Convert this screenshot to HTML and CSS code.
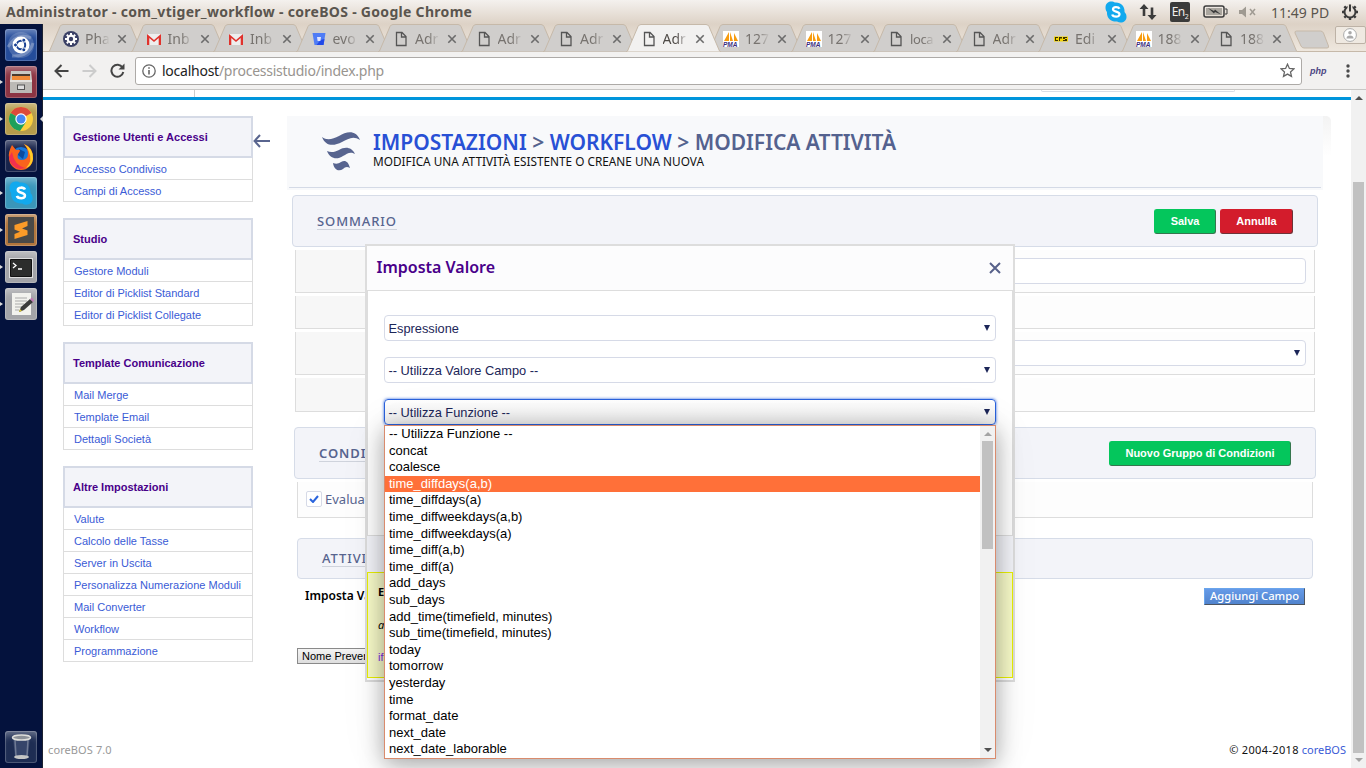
FILE: index.html
```html
<!DOCTYPE html>
<html lang="it">
<head>
<meta charset="utf-8">
<title>Administrator - com_vtiger_workflow - coreBOS</title>
<link rel="stylesheet" href="styles.css">
</head>
<body>
<svg width="0" height="0" class="defs">
  <defs>
    <symbol id="tab" viewBox="0 0 96 28"><path d="M0 28 L1.5 27 L12 2.5 Q13 .5 15 .5 H80 Q82 .5 83 2.5 L93.5 27 L95 28Z" stroke="#c6b9a9" stroke-width="1"/></symbol>
    <symbol id="page" viewBox="0 0 16 16"><path d="M3.500 1.500h5.500l4 4V14.500h-9.500z M8.500 1.500v4.500h4.500" fill="none" stroke="#555" stroke-width="1.300"/></symbol>
    <symbol id="x" viewBox="0 0 10 10"><path d="M1.300 1.300l7.400 7.400M8.700 1.300l-7.400 7.400" stroke="#6b6b6b" stroke-width="1.600"/></symbol>
    <symbol id="mail" viewBox="0 0 16 16"><path d="M1 3h14v11H1z" fill="#eee"/><path d="M1 14V3l7 6 7-6v11h-2.300V7L8 11 3.300 7v7z" fill="#e0322c"/></symbol>
    <symbol id="pma" viewBox="0 0 16 16"><path d="M0 0h16v16H0z" fill="#fff"/><path d="M1 10L6 1v9zM7 10V1l3 9zM11 10V2l4 8z" fill="#f89c0e"/><text x="0" y="15.500" class="pma-text">PMA</text></symbol>
    <symbol id="gear" viewBox="0 0 16 16"><circle cx="8" cy="8" r="8" fill="#3a4066"/><circle cx="8" cy="8" r="3.300" fill="none" stroke="#fff" stroke-width="2.200"/><path d="M8 2v2M8 12v2M2 8h2M12 8h2M3.800 3.800l1.400 1.400M10.800 10.800l1.400 1.400M12.200 3.800l-1.400 1.400M5.200 10.800l-1.400 1.400" stroke="#fff" stroke-width="2"/></symbol>
    <symbol id="bit" viewBox="0 0 16 16"><path d="M1.500 2h13l-2 12h-9z" fill="#4f7cf5"/><path d="M9.500 9l4-1-1 6h-7z" fill="#2149e8"/><path d="M6 6h4l-.6 4H6.600z" fill="#dfe6ff"/></symbol>
    <symbol id="core" viewBox="0 0 16 16"><path d="M1 5.500h14v5H1z" fill="#f5d400"/><path d="M2 6h3v1H3v2h2v1H2zM6 6h3v1.500H7V10H6zM10 6h4v1h-2v1h2v2h-4V9h2V8h-2z" fill="#3c3300"/></symbol>
    <symbol id="skype" viewBox="0 0 22 22"><path d="M6 .5c2 0 3 .5 4 1 6-.5 10 4 9.500 9.500C21 12.500 21.500 14 21.500 16c0 5-5.500 7-9.500 4.500C6 21 1.500 17 2 11 .8 9.500.5 8 .5 6.500.5 3 3 .5 6 .5z" fill="#12a9ee"/><path d="M14.500 7.700C13.500 5.500 8 5.300 8 8.200c0 3 6.500 1.900 6.500 5.100 0 3.300-6.500 3-7.300.2" fill="none" stroke="#fff" stroke-width="2.300"/></symbol>
  </defs>
</svg>

<header class="titlebar">
  <div class="window-title">Administrator - com_vtiger_workflow - coreBOS - Google Chrome</div>
  <div class="indicators">
    <svg width="22" height="22"><use href="#skype"/></svg>
    <svg class="ind-net" width="18" height="18" viewBox="0 0 18 18"><path d="M5 1l4.500 5H6.300v7H3.700V6H.5zM13 17l4.500-5h-3.200V4.500h-2.600V12H8.500z" fill="#3b3b3b"/></svg>
    <span class="lang">En<sub>2</sub></span>
    <svg class="ind-bat" width="25" height="14" viewBox="0 0 25 14"><rect x="1" y="1" width="20" height="11" rx="2" fill="none" stroke="#3b3b3b" stroke-width="1.500"/><path d="M22 4h2v5h-2" fill="none" stroke="#3b3b3b"/><path d="M3 3h16v7H3z" fill="#aaa69f"/><path d="M5 3l6 3 1-1.500 6 5-6-2.500-1 1.500z" fill="#3b3b3b"/></svg>
    <svg class="ind-vol" width="18" height="12" viewBox="0 0 18 12"><path d="M0 4h3l4-3.500v11L3 8H0z" fill="#9f9a92"/><path d="M11 3l5 6M16 3l-5 6" stroke="#9f9a92" stroke-width="1.500"/></svg>
    <span class="clock">11:49 PD</span>
    <svg class="ind-power" width="18" height="18" viewBox="0 0 18 18"><circle cx="9" cy="9" r="5.500" fill="none" stroke="#3b3b3b" stroke-width="2"/><path d="M9 15v2M1 9h2M15 9h2M3.300 3.300l1.700 1.700M13 13l1.700 1.700M14.700 3.300L13 5M5 13l-1.700 1.700" stroke="#3b3b3b" stroke-width="2.400"/><path d="M6.500 1h5v5h-5z" fill="#e6e0d8"/><path d="M9 1.500v7" stroke="#3b3b3b" stroke-width="2"/></svg>
  </div>
</header>

<div class="desktop">
  <nav class="launcher">
    <div class="tile t-dash"><svg viewBox="0 0 32 32"><circle cx="16" cy="16" r="13" fill="#fff" opacity=".16"/><path d="M3 18Q12 3 26 9M7 27Q24 28 28 14" fill="none" stroke="#fff" stroke-width="3" opacity=".25"/><circle cx="16" cy="16" r="8.500" fill="#fff"/><circle cx="16" cy="16" r="4.200" fill="none" stroke="#173f92" stroke-width="2"/><g fill="#173f92" stroke="#fff"><circle cx="10.500" cy="16" r="2"/><circle cx="18.800" cy="11.200" r="2"/><circle cx="18.800" cy="20.800" r="2"/></g></svg></div>
    <div class="tile t-files run"><svg viewBox="0 0 32 32"><path d="M6 5h20l1 9H5z" fill="#c9c7c3"/><path d="M7 8h18v3H7z" fill="#4a3a30"/><path d="M7 10h18v4H7z" fill="#f08a39"/><path d="M5 14h22v13H5z" fill="#bbb9b5"/><path d="M5 14h22v2H5z" fill="#e3e1dd"/><rect x="12.500" y="19" width="7" height="4.500" fill="#ddd" stroke="#555"/></svg></div>
    <div class="tile t-chrome run active"><svg viewBox="0 0 32 32"><circle cx="16" cy="16" r="12" fill="#fbcf3f"/><path d="M16 16L5.600 10A12 12 0 0 1 26.400 10z" fill="#dc4a3b"/><path d="M16 16L5.600 10A12 12 0 0 0 15 28l6-9z" fill="#1da05c"/><circle cx="16" cy="16" r="5.700" fill="#fff"/><circle cx="16" cy="16" r="4.500" fill="#4587f4"/></svg></div>
    <div class="tile t-fox"><svg viewBox="0 0 32 32"><circle cx="16" cy="17" r="10" fill="#1677db"/><path d="M14 9l6 3-2 7-5-4z" fill="#0a4aa0"/><path d="M7 5l4 5q4-1 4 1l-2 3q-2 5 3 6 7 0 7-6 0-5-4-10 9 3 9 14a12 12 0 0 1-24 0Q3 12 7 5z" fill="#fb631c"/><path d="M19 4q10 5 9 15-1 7-7 9 7-7 3-16-1-4-5-8z" fill="#ffce28"/><path d="M4 17q1 10 11 12l5-1Q9 25 7 12z" fill="#f2304e"/></svg></div>
    <div class="tile t-skype run"><svg viewBox="0 0 32 32"><g transform="translate(4 4) scale(1.100)"><use href="#skype" width="22" height="22"/></g></svg></div>
    <div class="tile t-sublime run"><svg viewBox="0 0 32 32"><path d="M3 3h26v26H3z" fill="#4a4947"/><path d="M9.500 11L22.500 7v5L17 14.500l5.500 2v4.500l-13 4v-5l5.500-2.200-5.500-2.300z" fill="#fb9b28"/></svg></div>
    <div class="tile t-term run"><svg viewBox="0 0 32 32"><path d="M4 7h24v20H4z" fill="#ddd"/><path d="M5.500 8.500h21v17h-21z" fill="#2c2d2c" stroke="#111"/><path d="M8 12l3 2.500L8 17M13 18h4" fill="none" stroke="#fff" stroke-width="1.300"/></svg></div>
    <div class="tile t-edit run"><svg viewBox="0 0 32 32"><path d="M7 5h19v22H7z" fill="#f2f2ee"/><path d="M10 10h12M10 13h12M10 16h9M10 19h7M10 22h4" stroke="#aaa"/><path d="M14 24l2-5 9-8 3 3-9 8z" fill="#3b3b3b"/><path d="M25 11l2-1.500 2 3-1 1.500z" fill="#c178b4"/><path d="M14 24l1-3 2 2z" fill="#d8c533"/></svg></div>
    <div class="tile t-trash"><svg viewBox="0 0 32 32"><path d="M8 7h17l-2 19q-6.500 3-13 0z" fill="#36456a"/><path d="M10 9l1 16M23 9l-1 16" stroke="#6f7a94" stroke-width="1.500"/><ellipse cx="16.500" cy="6.500" rx="9" ry="2.600" fill="#8b9098" stroke="#dededb" stroke-width="1.500"/><ellipse cx="16.500" cy="26" rx="7.500" ry="2" fill="#c5c6c5"/></svg></div>
  </nav>

  <div class="browser">
    <div class="tabs">
      <div class="tab"><svg class="shape"><use href="#tab"/></svg><svg class="fav"><use href="#gear"/></svg><span>Pha</span><svg class="close"><use href="#x"/></svg></div>
      <div class="tab"><svg class="shape"><use href="#tab"/></svg><svg class="fav"><use href="#mail"/></svg><span>Inb</span><svg class="close"><use href="#x"/></svg></div>
      <div class="tab"><svg class="shape"><use href="#tab"/></svg><svg class="fav"><use href="#mail"/></svg><span>Inb</span><svg class="close"><use href="#x"/></svg></div>
      <div class="tab"><svg class="shape"><use href="#tab"/></svg><svg class="fav"><use href="#bit"/></svg><span>evo</span><svg class="close"><use href="#x"/></svg></div>
      <div class="tab"><svg class="shape"><use href="#tab"/></svg><svg class="fav"><use href="#page"/></svg><span>Adr</span><svg class="close"><use href="#x"/></svg></div>
      <div class="tab"><svg class="shape"><use href="#tab"/></svg><svg class="fav"><use href="#page"/></svg><span>Adr</span><svg class="close"><use href="#x"/></svg></div>
      <div class="tab"><svg class="shape"><use href="#tab"/></svg><svg class="fav"><use href="#page"/></svg><span>Adr</span><svg class="close"><use href="#x"/></svg></div>
      <div class="tab current"><svg class="shape"><use href="#tab"/></svg><svg class="fav"><use href="#page"/></svg><span>Adr</span><svg class="close"><use href="#x"/></svg></div>
      <div class="tab"><svg class="shape"><use href="#tab"/></svg><svg class="fav"><use href="#pma"/></svg><span>127</span><svg class="close"><use href="#x"/></svg></div>
      <div class="tab"><svg class="shape"><use href="#tab"/></svg><svg class="fav"><use href="#pma"/></svg><span>127</span><svg class="close"><use href="#x"/></svg></div>
      <div class="tab"><svg class="shape"><use href="#tab"/></svg><svg class="fav"><use href="#page"/></svg><span class="tight">loca</span><svg class="close"><use href="#x"/></svg></div>
      <div class="tab"><svg class="shape"><use href="#tab"/></svg><svg class="fav"><use href="#page"/></svg><span>Adr</span><svg class="close"><use href="#x"/></svg></div>
      <div class="tab"><svg class="shape"><use href="#tab"/></svg><svg class="fav"><use href="#core"/></svg><span>Edi</span><svg class="close"><use href="#x"/></svg></div>
      <div class="tab"><svg class="shape"><use href="#tab"/></svg><svg class="fav"><use href="#pma"/></svg><span>188</span><svg class="close"><use href="#x"/></svg></div>
      <div class="tab"><svg class="shape"><use href="#tab"/></svg><svg class="fav"><use href="#page"/></svg><span>188</span><svg class="close"><use href="#x"/></svg></div>
      <svg class="newtab" width="36" height="19" viewBox="0 0 36 19"><path d="M2.500 1h24q2 0 3 2l5 13q.5 2-1.500 2H10q-2 0-3-2L1 3q-.5-2 1.500-2z" fill="#d0cecc" stroke="#c6b9a9"/></svg>
      <div class="profile"><svg width="14" height="14" viewBox="0 0 14 14"><circle cx="7" cy="7" r="6.400" fill="#fff" stroke="#aaa"/><circle cx="7" cy="4.800" r="1.800" fill="#aaa"/><path d="M3.500 10.500q0-3 3.500-3t3.500 3z" fill="#aaa"/></svg></div>
    </div>

    <div class="toolbar">
      <svg class="nav-back" width="15" height="14" viewBox="0 0 15 14"><path d="M7.500 1L1.500 7l6 6M1.500 7H14.500" fill="none" stroke="#444" stroke-width="2"/></svg>
      <svg class="nav-fwd" width="15" height="14" viewBox="0 0 15 14"><path d="M7.500 1l6 6-6 6M13.500 7H.5" fill="none" stroke="#ccc" stroke-width="2"/></svg>
      <svg class="nav-reload" width="15" height="15" viewBox="0 0 15 15"><path d="M12.500 4.500A6 6 0 1 0 13.300 9" fill="none" stroke="#444" stroke-width="2"/><path d="M14.500.500v6h-6z" fill="#444"/></svg>
      <div class="omnibox">
        <svg width="14" height="14" viewBox="0 0 14 14"><circle cx="7" cy="7" r="6.200" fill="none" stroke="#666" stroke-width="1.300"/><path d="M7 6v4.500M7 3.300v1.500" stroke="#666" stroke-width="1.600"/></svg>
        <span class="url"><b>localhost</b>/processistudio/index.php</span>
        <svg class="star" width="15" height="15" viewBox="0 0 15 15"><path d="M7.500 1.200l1.900 4.200 4.500.5-3.400 3 1 4.500-4-2.300-4 2.300 1-4.500-3.400-3 4.500-.5z" fill="none" stroke="#666" stroke-width="1.300"/></svg>
      </div>
      <span class="php">php</span>
      <svg class="menu" width="4" height="14" viewBox="0 0 4 14"><g fill="#4a4a4a"><circle cx="2" cy="2" r="1.700"/><circle cx="2" cy="7" r="1.700"/><circle cx="2" cy="12" r="1.700"/></g></svg>
    </div>

    <div class="viewport">
      <div class="page">
        <div class="page-top"><i class="top-divider"></i><i class="top-search"></i></div>
        <div class="columns">
          <aside class="sidebar">
            <section><h3>Gestione Utenti e Accessi</h3><a>Accesso Condiviso</a><a>Campi di Accesso</a></section>
            <section><h3>Studio</h3><a>Gestore Moduli</a><a>Editor di Picklist Standard</a><a>Editor di Picklist Collegate</a></section>
            <section><h3>Template Comunicazione</h3><a>Mail Merge</a><a>Template Email</a><a>Dettagli Società</a></section>
            <section><h3>Altre Impostazioni</h3><a>Valute</a><a>Calcolo delle Tasse</a><a>Server in Uscita</a><a>Personalizza Numerazione Moduli</a><a>Mail Converter</a><a>Workflow</a><a>Programmazione</a></section>
          </aside>
          <svg class="collapse" width="18" height="14" viewBox="0 0 18 14"><path d="M7 1L1.500 7 7 13M1.500 7H17" fill="none" stroke="#59658f" stroke-width="2"/></svg>
          <main class="main">
            <div class="banner">
              <svg width="38" height="40" viewBox="0 0 38 40"><g fill="#57648f"><path d="M0 6C5 10 11 8 17 5 25 0 34-1 38 9 31 4 26 8 20 11 12 15 4 16 0 6z"/><path d="M5 20c4 2 8 1 12-1 6-4 13-3 16 4-5-3-8 0-12 2-6 4-13 3-16-5z"/><path d="M11 32c3 1 5 1 8-1 4-2 7-1 9 6-3-2-5-1-7 1-4 3-9 1-10-6z"/></g></svg>
              <div class="banner-text">
                <h1><a>IMPOSTAZIONI</a> &gt; <a>WORKFLOW</a> &gt; MODIFICA ATTIVITÀ</h1>
                <p>MODIFICA UNA ATTIVITÀ ESISTENTE O CREANE UNA NUOVA</p>
              </div>
            </div>
            <div class="panel panel-summary"><span class="caption">SOMMARIO</span><div class="actions"><button class="btn save">Salva</button><button class="btn cancel">Annulla</button></div></div>
            <div class="rows">
              <div class="row r43"><i class="label"></i><div class="cell"><div class="field"></div></div></div>
              <div class="row r33"><i class="label"></i><div class="cell"></div></div>
              <div class="row r43"><i class="label"></i><div class="cell"><div class="field"><i class="caret"></i></div></div></div>
              <div class="row r34"><i class="label"></i><div class="cell"></div></div>
            </div>
            <div class="panel panel-cond"><span class="caption">CONDIZIONI</span><button class="btn group">Nuovo Gruppo di Condizioni</button></div>
            <div class="evaluate"><span class="check"><svg width="10" height="8" viewBox="0 0 10 8"><path d="M1 4l3 3 5-6" fill="none" stroke="#2a64dd" stroke-width="2"/></svg></span><span>Evaluate</span></div>
            <div class="panel panel-act"><span class="caption">ATTIVITÀ</span></div>
            <div class="assign"><b>Imposta Valore</b><button class="add">Aggiungi Campo</button></div>
            <button class="native">Nome Prevent</button>
          </main>
        </div>
        <footer class="footer"><span class="version">coreBOS 7.0</span><span class="copy"><span>© 2004-2018</span> <a>coreBOS</a></span></footer>

        <div class="modal">
          <div class="modal-head"><h2>Imposta Valore</h2><svg width="12" height="12" viewBox="0 0 12 12"><path d="M1 1l10 10M11 1L1 11" stroke="#57618a" stroke-width="2"/></svg></div>
          <div class="modal-body">
            <div class="select">Espressione<i class="caret"></i></div>
            <div class="select">-- Utilizza Valore Campo --<i class="caret"></i></div>
            <div class="select focus">-- Utilizza Funzione --<i class="caret"></i></div>
          </div>
          <div class="modal-foot"></div>
          <div class="hint"><b>E</b><em>a</em><span>if</span></div>
        </div>

        <div class="dropdown">
          <div class="options">
            <div>-- Utilizza Funzione --</div><div>concat</div><div>coalesce</div><div class="hot">time_diffdays(a,b)</div><div>time_diffdays(a)</div><div>time_diffweekdays(a,b)</div><div>time_diffweekdays(a)</div><div>time_diff(a,b)</div><div>time_diff(a)</div><div>add_days</div><div>sub_days</div><div>add_time(timefield, minutes)</div><div>sub_time(timefield, minutes)</div><div>today</div><div>tomorrow</div><div>yesterday</div><div>time</div><div>format_date</div><div>next_date</div><div>next_date_laborable</div>
          </div>
          <div class="scroll list-scroll"><i class="up faint"></i><i class="thumb"></i><i class="down"></i></div>
        </div>
      </div>
      <div class="scroll page-scroll"><i class="up"></i><i class="thumb"></i><i class="down faint"></i></div>
    </div>
  </div>
</div>
</body>
</html>
```
FILE: styles.css
```css
* { box-sizing: border-box; }
body { margin: 0; width: 1366px; height: 768px; overflow: hidden; display: flex; flex-direction: column; background: #fff; font-family: "Noto Sans", sans-serif; }
h1, h2, h3, p { margin: 0; }
button { font-family: inherit; padding: 0; margin: 0; }
svg { display: block; flex: none; }
i { display: block; }
.defs { position: absolute; }

/* desktop title bar */
.titlebar { height: 24px; flex: none; display: flex; align-items: center; justify-content: space-between; padding: 0 7px 0 6px; background: linear-gradient(#f4f1ee, #ddd2c6); color: #5a554e; font-size: 14px; }
.window-title { font-weight: 700; letter-spacing: .3px; white-space: nowrap; margin-top: -2px; }
.indicators { display: flex; align-items: center; }
.ind-net { margin-left: 12px; }
.lang { margin-left: 13px; width: 20px; height: 20px; border-radius: 2px; background: #3b3b3b; color: #f2efeb; font-size: 12px; line-height: 20px; text-align: center; letter-spacing: -.5px; white-space: nowrap; overflow: hidden; }
.lang sub { font-size: 7px; line-height: 1px; }
.ind-bat { margin-left: 13px; }
.ind-vol { margin-left: 11px; }
.clock { margin-left: 14px; width: 58px; white-space: nowrap; font-size: 14px; }
.ind-power { margin-left: 12px; }

.desktop { flex: 1; display: flex; min-height: 0; }

/* launcher */
.launcher { width: 43px; flex: none; padding: 5px 0 5px 5px; display: flex; flex-direction: column; gap: 5px; background: #04123d; border-right: 1px solid #1d2230; }
.tile { position: relative; width: 32px; height: 32px; border-radius: 3px; box-shadow: inset 0 0 0 1px rgba(255,255,255,.2), inset 0 8px 7px -4px rgba(255,255,255,.35); }
.tile svg { width: 32px; height: 32px; }
.tile.run::before { content: ""; position: absolute; left: -5px; top: 14px; border: solid transparent; border-width: 2px 0 2px 3px; border-left-color: #ddd; }
.tile.active::after { content: ""; position: absolute; right: -6px; top: 13px; border: solid transparent; border-width: 3px 3px 3px 0; border-right-color: #ddd; }
.t-dash { background: #244c9b; }
.t-files { background: #8c3443; }
.t-chrome { background: #b59c4b; }
.t-fox { background: #17234b; }
.t-skype { background: #3a96ba; }
.t-sublime { background: #b1753c; }
.t-term { background: #a3a4a8; }
.t-edit { background: #a3a4a8; }
.t-trash { background: #1e2d53; margin-top: auto; }

/* browser chrome */
.browser { flex: 1; display: flex; flex-direction: column; min-width: 0; }
.tabs { height: 28px; flex: none; display: flex; padding-left: 18px; background: linear-gradient(#ddd2c6, #efe8df); box-shadow: inset 0 -1px #c6b9a9; }
.tab { position: relative; width: 82.5px; flex: none; height: 28px; display: flex; align-items: center; padding: 1px 0 0 2px; color: #77736f; font-size: 14px; }
.shape { position: absolute; left: -13px; top: 0; width: 96px; height: 28px; fill: #d0cecc; }
.current .shape { fill: #f2f1f0; }
.current { z-index: 1; color: #4f4b47; }
.fav { position: relative; width: 16px; height: 16px; margin-right: 6px; }
.tab span { position: relative; width: 26px; overflow: hidden; white-space: nowrap; -webkit-mask-image: linear-gradient(90deg, #000 50%, transparent 95%); mask-image: linear-gradient(90deg, #000 50%, transparent 95%); }
.tab .tight { font-size: 13px; letter-spacing: -.4px; }
.close { position: relative; width: 10px; height: 10px; margin-left: 6px; }
.pma-text { font: italic 700 6.500px "Liberation Sans", sans-serif; fill: #3b2c7c; }
.newtab { margin: 6px 0 0 -5px; }
.profile { margin: 2px 0 0 5px; width: 32px; height: 18px; border: 1px solid #bdb2a6; border-radius: 2px; display: flex; justify-content: center; align-items: center; background: #efe9e1; }
.toolbar { height: 38px; flex: none; display: flex; align-items: center; padding-left: 11px; background: #f2f1f0; border-bottom: 1px solid #c8c7c5; }
.nav-fwd, .nav-reload { margin-left: 13px; }
.omnibox { margin-left: 10px; width: 1167px; height: 28px; border: 1px solid #adaaa7; border-radius: 3px; background: #fff; display: flex; align-items: center; padding: 0 6px; }
.url { margin-left: 6px; flex: 1; font-size: 14px; letter-spacing: -.25px; color: #98948f; }
.url b { font-weight: 400; color: #222; }
.php { margin-left: 8px; font: italic 700 9px "Liberation Sans", sans-serif; color: #4b4583; }
.menu { margin-left: 19px; }

.viewport { flex: 1; display: flex; min-height: 0; }
.page { position: relative; width: 1308px; flex: none; overflow: hidden; display: flex; flex-direction: column; background: #fff; }

/* scrollbars */
.scroll { width: 15px; flex: none; display: flex; flex-direction: column; align-items: center; background: #f1f1f1; }
.scroll .up, .scroll .down { width: 0; height: 0; border: solid transparent; }
.scroll .up { border-width: 0 4px 4px; border-bottom-color: #505050; }
.scroll .down { border-width: 4px 4px 0; border-top-color: #505050; margin-top: auto; }
.scroll .up.faint { border-bottom-color: #a3a3a3; }
.scroll .down.faint { border-top-color: #a3a3a3; }
.thumb { width: 11px; background: #c1c1c1; }
.page-scroll { padding: 6px 0 6px; }
.page-scroll .thumb { margin-top: 82px; height: 571px; }
.list-scroll { padding: 6px 0 6px; }
.list-scroll .thumb { margin-top: 5px; height: 108px; }

/* page */
.page-top { height: 10px; flex: none; border-bottom: 3px solid #0095dc; display: flex; justify-content: space-between; }
.top-divider { width: 1px; margin-left: 151px; background: #ccc; }
.top-search { width: 194px; height: 2px; margin-right: 116px; border: 1px solid #d8dde6; border-top: 0; border-radius: 0 0 4px 4px; }
.columns { flex: 1; display: flex; padding: 16px 0 0 20px; min-height: 0; }
.sidebar { width: 190px; flex: none; display: flex; flex-direction: column; gap: 16px; font-family: "Liberation Sans", sans-serif; font-size: 11px; }
.sidebar h3 { height: 42px; border: 2px solid #d5dae6; background: #f3f4f9; padding-left: 8px; font-size: 11px; line-height: 38px; color: #49008a; }
.sidebar a { display: block; height: 22px; border: 1px solid #ddd; border-top: 0; padding-left: 10px; line-height: 22px; color: #3a5bd6; white-space: nowrap; }
.collapse { margin: 18px 0 0 0; }
.main { margin-left: 16px; width: 1044px; flex: none; display: flex; flex-direction: column; }
.banner { position: relative; height: 74px; flex: none; width: 1036px; background: #f8f9fb; display: flex; padding: 15px 0 0 35px; }
.banner::before { content: ""; position: absolute; left: 2px; right: 2px; bottom: 2px; height: 1px; background: #d4dae6; }
.banner::after { content: ""; position: absolute; left: 1036px; top: 0; width: 8px; height: 40px; border-top-right-radius: 5px; background: linear-gradient(#f3f3f3, #fff); }
.banner-text { margin-left: 13px; white-space: nowrap; }
.banner h1 { font-size: 21px; line-height: 24px; margin-top: -1px; font-weight: 600; color: #54628f; }
.banner h1 a { color: #2850d5; }
.banner p { font-size: 11.800px; line-height: 14px; color: #111; }
.panel { flex: none; display: flex; align-items: center; justify-content: space-between; padding: 0 24px; border: 1px solid #d6dce8; border-radius: 4px; background: #f3f4f9; }
.caption { font-size: 13px; line-height: 16px; font-weight: 500; letter-spacing: .9px; color: #57648f; border-bottom: 1px solid #cfd3dc; }
.panel-summary { margin: 5px 0 0 5px; width: 1026px; height: 52px; }
.panel-cond { margin: 15px 0 0 7px; width: 1022px; height: 52px; }
.panel-cond .caption { font-weight: 600; }
.panel-act { margin: 20px 0 0 10px; width: 1016px; height: 41px; }
.actions { display: flex; gap: 4px; }
.btn { height: 25px; border: 1px solid; border-radius: 3px; color: #fff; font: 700 11px "Liberation Sans", sans-serif; }
.save { width: 62px; background: #04c65c; border-color: #04c65c #35764e #35764e #04c65c; }
.group { width: 182px; background: #04c65c; border-color: #04c65c #35764e #35764e #04c65c; }
.cancel { width: 73px; background: #d31c2c; border-color: #d31c2c #6d3338 #6d3338 #d31c2c; }
.rows { flex: none; margin: 3px 0 0 8px; width: 1020px; display: flex; flex-direction: column; gap: 3px; }
.row { display: flex; border: 1px solid #ddd; border-top: 0; background: #fdfdfd; }
.r43 { height: 43px; }
.r33 { height: 33px; }
.r34 { height: 34px; }
.label { width: 203px; background: #f7f7f7; }
.cell { flex: 1; padding: 8px 8px 0; }
.field { height: 26px; border: 1px solid #d6dae7; border-radius: 4px; background: #fff; display: flex; justify-content: flex-end; align-items: center; padding-right: 5px; }
.caret { width: 0; height: 0; border: solid transparent; border-width: 6px 3.500px 0; border-top-color: #1c2658; }
.evaluate { flex: none; margin: 3px 0 0 10px; width: 1016px; height: 36px; border: 1px solid #ddd; border-top: 0; background: #fdfdfd; display: flex; align-items: center; padding: 0 0 2px 8px; gap: 3px; font-size: 13px; color: #57648f; }
.check { width: 16px; height: 16px; border: 1px solid #d6dae7; border-radius: 2px; background: #fff; display: flex; align-items: center; justify-content: center; }
.assign { flex: none; height: 34px; margin: 0 26px 0 18px; display: flex; align-items: center; justify-content: space-between; font-size: 12px; }
.assign b { font-weight: 600; margin-top: -2px; }
.add { width: 101px; height: 17px; border: 1px solid; border-color: #6aa5ec #4d5560 #4d5560 #6aa5ec; background: linear-gradient(#669be8, #5083cd); color: #fff; font-size: 11.200px; line-height: 14px; font-weight: 500; white-space: nowrap; }
.native { align-self: flex-start; margin: 35px 0 0 10px; width: 84px; height: 16px; border: 1px solid #8a8a8a; background: linear-gradient(#f4f4f4, #dedede); font: 11px "Liberation Sans", sans-serif; text-align: left; padding-left: 4px; white-space: nowrap; overflow: hidden; }
.footer { flex: none; height: 37px; padding: 9px 5px 0; display: flex; justify-content: space-between; font-size: 11px; line-height: 20px; color: #999; }
.version { letter-spacing: .1px; }
.copy { color: #111; }
.copy span { letter-spacing: .35px; }
.copy a { color: #3a5bd6; }

/* modal above the form */
.modal { position: absolute; left: 322px; top: 154px; width: 650px; height: 438px; border: 2px solid #ddd; background: #fff; display: flex; flex-direction: column; padding: 0 0 2px; }
.modal-head { height: 45px; flex: none; border-bottom: 1px solid #ddd; background: #fcfcfd; display: flex; align-items: center; justify-content: space-between; padding: 0 12px 0 9.500px; }
.modal h2 { font-size: 16px; line-height: 20px; font-weight: 600; color: #49008a; margin-top: -2px; }
.modal-body { flex: none; height: 244px; border: 1px solid #ddd; border-width: 0 1px; padding: 24px 16px 0 16px; display: flex; flex-direction: column; gap: 16px; }
.select { height: 26px; border: 1px solid #d6dae7; border-radius: 4px; background: #fff; display: flex; align-items: center; justify-content: space-between; padding: 0 5px 0 3.500px; font: 12.800px "Liberation Sans", sans-serif; color: #1c2658; }
.focus { border-color: #2a62dc; box-shadow: 0 0 3px #2a62dc; background: linear-gradient(#fff, #efefef); }
.modal-foot { flex: none; height: 37px; background: #f3f4f9; border-top: 1px solid #ddd; }
.hint { flex: none; height: 106px; border: 1px solid #eaf100; background: #f8fbc9; padding: 10px 10px; display: flex; flex-direction: column; align-items: flex-start; font-size: 11px; line-height: 17px; gap: 16px; }
.hint span { font-family: "Liberation Sans", sans-serif; color: #7d27e8; }

/* open option list */
.dropdown { position: absolute; left: 341px; top: 335px; width: 612px; height: 334px; border: 1px solid #d98b6d; background: #fff; display: flex; box-shadow: 0 5px 22px rgba(0,0,0,.34), 0 0 50px rgba(0,0,0,.06); }
.options { flex: 1; overflow: hidden; font: 13px "Liberation Sans", sans-serif; color: #000; }
.options div { height: 16.600px; line-height: 16.600px; padding-left: 4px; white-space: nowrap; }
.options .hot { background: #ff7039; color: #fff; }
```
